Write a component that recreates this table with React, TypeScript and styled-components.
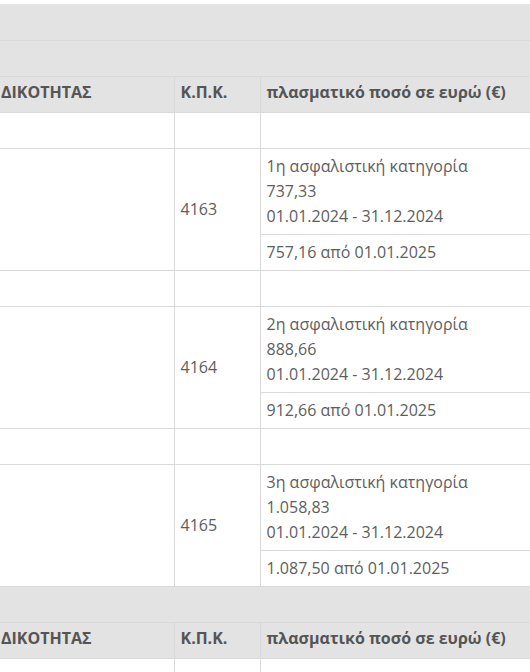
import React from "react";
import styled, { createGlobalStyle } from "styled-components";

const Global = createGlobalStyle`
  html, body { margin: 0; padding: 0; background: #fff; }
  body { font-family: "Open Sans", "Noto Sans", sans-serif; overflow: hidden; }
`;

const Page = styled.div`
  padding-top: 4px;
  width: 530px;
  overflow: hidden;
`;

const Table = styled.table`
  border-collapse: collapse;
  width: 640px;
  table-layout: fixed;
  font-size: 16px;
  line-height: 25px;
  color: #5e5e5e;
`;

const Band = styled.td<{ $tall?: boolean }>`
  background: #e3e3e3;
  height: ${(p) => (p.$tall ? "26px" : "25px")};
  padding: 5px 0;
  border-bottom: 1px solid #d9d9d9;
`;

const HeadCell = styled.th<{ $first?: boolean }>`
  background: #e3e3e3;
  text-align: left;
  font-weight: 700;
  color: #555;
  padding: 3px 6px 7px ${(p) => (p.$first ? "1px" : "6px")};
  height: 25px;
  border-left: ${(p) => (p.$first ? "none" : "1px solid #d9d9d9")};
  white-space: nowrap;
`;

const Cell = styled.td<{ $first?: boolean; $middle?: boolean }>`
  padding: 5px 6px;
  height: 25px;
  vertical-align: ${(p) => (p.$middle ? "middle" : "top")};
  border-top: 1px solid #d9d9d9;
  border-bottom: 1px solid #d9d9d9;
  border-left: ${(p) => (p.$first ? "none" : "1px solid #d9d9d9")};
  white-space: nowrap;
`;

const Line = styled.div``;

type Item = { cat: string; amount: string; next: string; kpk: string };

const items: Item[] = [
  { cat: "1η ασφαλιστική κατηγορία", amount: "737,33", next: "757,16 από 01.01.2025", kpk: "4163" },
  { cat: "2η ασφαλιστική κατηγορία", amount: "888,66", next: "912,66 από 01.01.2025", kpk: "4164" },
  { cat: "3η ασφαλιστική κατηγορία", amount: "1.058,83", next: "1.087,50 από 01.01.2025", kpk: "4165" },
];

const Header = () => (
  <tr>
    <HeadCell $first>ΔΙΚΟΤΗΤΑΣ</HeadCell>
    <HeadCell>Κ.Π.Κ.</HeadCell>
    <HeadCell>πλασματικό ποσό σε ευρώ (€)</HeadCell>
  </tr>
);

const Empty = () => (
  <tr>
    <Cell $first>&nbsp;</Cell>
    <Cell>&nbsp;</Cell>
    <Cell>&nbsp;</Cell>
  </tr>
);

export default function App() {
  return (
    <Page>
      <Global />
      <Table>
        <colgroup>
          <col style={{ width: 174 }} />
          <col style={{ width: 86 }} />
          <col style={{ width: 380 }} />
        </colgroup>
        <tbody>
          <tr>
            <Band colSpan={3} $tall>&nbsp;</Band>
          </tr>
          <tr>
            <Band colSpan={3}>&nbsp;</Band>
          </tr>
          <Header />
          {items.map((it) => (
            <React.Fragment key={it.kpk}>
              <Empty />
              <tr>
                <Cell $first rowSpan={2} $middle>
                  &nbsp;
                </Cell>
                <Cell rowSpan={2} $middle>
                  {it.kpk}
                </Cell>
                <Cell>
                  <Line>{it.cat}</Line>
                  <Line>{it.amount}</Line>
                  <Line>01.01.2024 - 31.12.2024</Line>
                </Cell>
              </tr>
              <tr>
                <Cell>{it.next}</Cell>
              </tr>
            </React.Fragment>
          ))}
          <tr>
            <Band colSpan={3}>&nbsp;</Band>
          </tr>
          <Header />
          <Empty />
        </tbody>
      </Table>
    </Page>
  );
}
